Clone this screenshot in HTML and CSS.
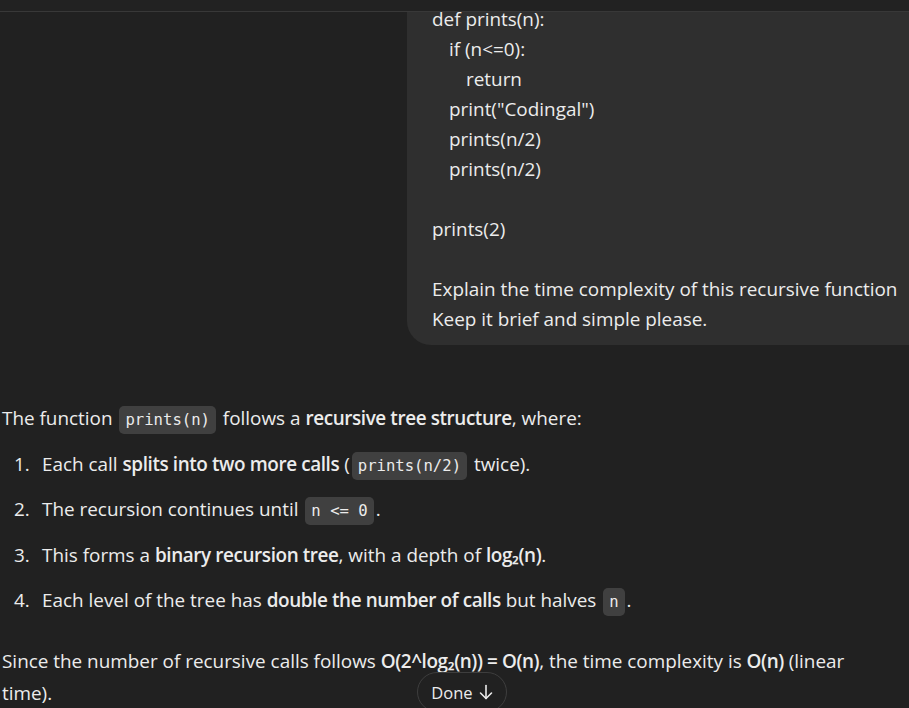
FILE: index.html
```html
<!DOCTYPE html>
<html lang="en">
<head>
<meta charset="utf-8">
<title>Chat</title>
<link rel="stylesheet" href="styles.css">
</head>
<body>
<div class="topbar"></div>
<main class="thread">
  <div class="user-row">
    <div class="bubble">
      <div class="line">def prints(n):</div>
      <div class="line ind1">if (n&lt;=0):</div>
      <div class="line ind2">return</div>
      <div class="line ind1">print("Codingal")</div>
      <div class="line ind1">prints(n/2)</div>
      <div class="line ind1">prints(n/2)</div>
      <div class="line">&nbsp;</div>
      <div class="line">prints(2)</div>
      <div class="line">&nbsp;</div>
      <div class="line">Explain the time complexity of this recursive function</div>
      <div class="line">Keep it brief and simple please.</div>
    </div>
  </div>
  <div class="answer">
    <p class="para first">The function <code>prints(n)</code> follows a <b>recursive tree structure</b>, where:</p>
    <ol class="steps">
      <li><span class="num">1.</span><span>Each call <b>splits into two more calls</b> (<code>prints(n/2)</code> twice).</span></li>
      <li><span class="num">2.</span><span>The recursion continues until <code>n &lt;= 0</code>.</span></li>
      <li><span class="num">3.</span><span>This forms a <b>binary recursion tree</b>, with a depth of <b>log₂(n)</b>.</span></li>
      <li><span class="num">4.</span><span>Each level of the tree has <b>double the number of calls</b> but halves <code>n</code>.</span></li>
    </ol>
    <p class="para last">Since the number of recursive calls follows <b>O(2^log₂(n)) = O(n)</b>, the time complexity is <b>O(n)</b> (linear time).</p>
  </div>
</main>
<button class="done">Done <svg class="arrow" width="14" height="16" viewBox="0 0 14 16" fill="none" stroke="#ececec" stroke-width="1.6" stroke-linecap="round" stroke-linejoin="round"><path d="M7 1.5V14.5"/><path d="M1.5 9L7 14.5L12.5 9"/></svg></button>
</body>
</html>
```
FILE: styles.css
```css
html, body {
  margin: 0;
  padding: 0;
  background: #212121;
  overflow: hidden;
}
body {
  font-family: "Open Sans", "Noto Sans", sans-serif;
  font-size: 18.9px;
  color: #ececec;
  height: 708px;
  position: relative;
}
.topbar {
  position: absolute;
  top: 0;
  left: 0;
  right: 0;
  height: 11px;
  background: #222222;
  border-bottom: 1px solid #383838;
  z-index: 5;
}
.thread {
  padding-left: 2px;
}
.user-row {
  padding-left: 405px;
  margin-right: -30px;
}
.bubble {
  background: #2f2f2f;
  border-radius: 24px;
  margin-top: -30px;
  padding: 34px 25px 11px 25px;
}
.line {
  line-height: 30px;
  white-space: nowrap;
}
.ind1 { padding-left: 17px; }
.ind2 { padding-left: 34px; }
.answer {
  padding-top: 57px;
}
.para {
  margin: 0;
  line-height: 32px;
}
.para.first {
  margin-bottom: 14px;
}
.para.last {
  padding-right: 20px;
}
.steps {
  list-style: none;
  margin: 0 0 29px 0;
  padding: 0 0 0 12px;
  display: flex;
  flex-direction: column;
  gap: 13.3px;
}
.steps li {
  display: flex;
  line-height: 32px;
  height: 32px;
}
.num {
  width: 28px;
  flex: none;
}
b {
  font-weight: 600;
  letter-spacing: -0.4px;
}
code {
  font-family: "DejaVu Sans Mono", "Liberation Mono", monospace;
  font-size: 15.6px;
  line-height: 1;
  background: #404040;
  border-radius: 5px;
  padding: 5px 6px;
  margin: 0 2px;
}
.done {
  position: absolute;
  left: 417px;
  top: 672px;
  width: 90px;
  height: 40px;
  border-radius: 20px;
  border: 1px solid #3e3e3e;
  background: #212121;
  color: #ececec;
  font-family: "Open Sans", "Noto Sans", sans-serif;
  font-size: 16.5px;
  display: flex;
  align-items: center;
  justify-content: center;
  gap: 6px;
  padding: 0;
}
.arrow {
  display: block;
}
```
